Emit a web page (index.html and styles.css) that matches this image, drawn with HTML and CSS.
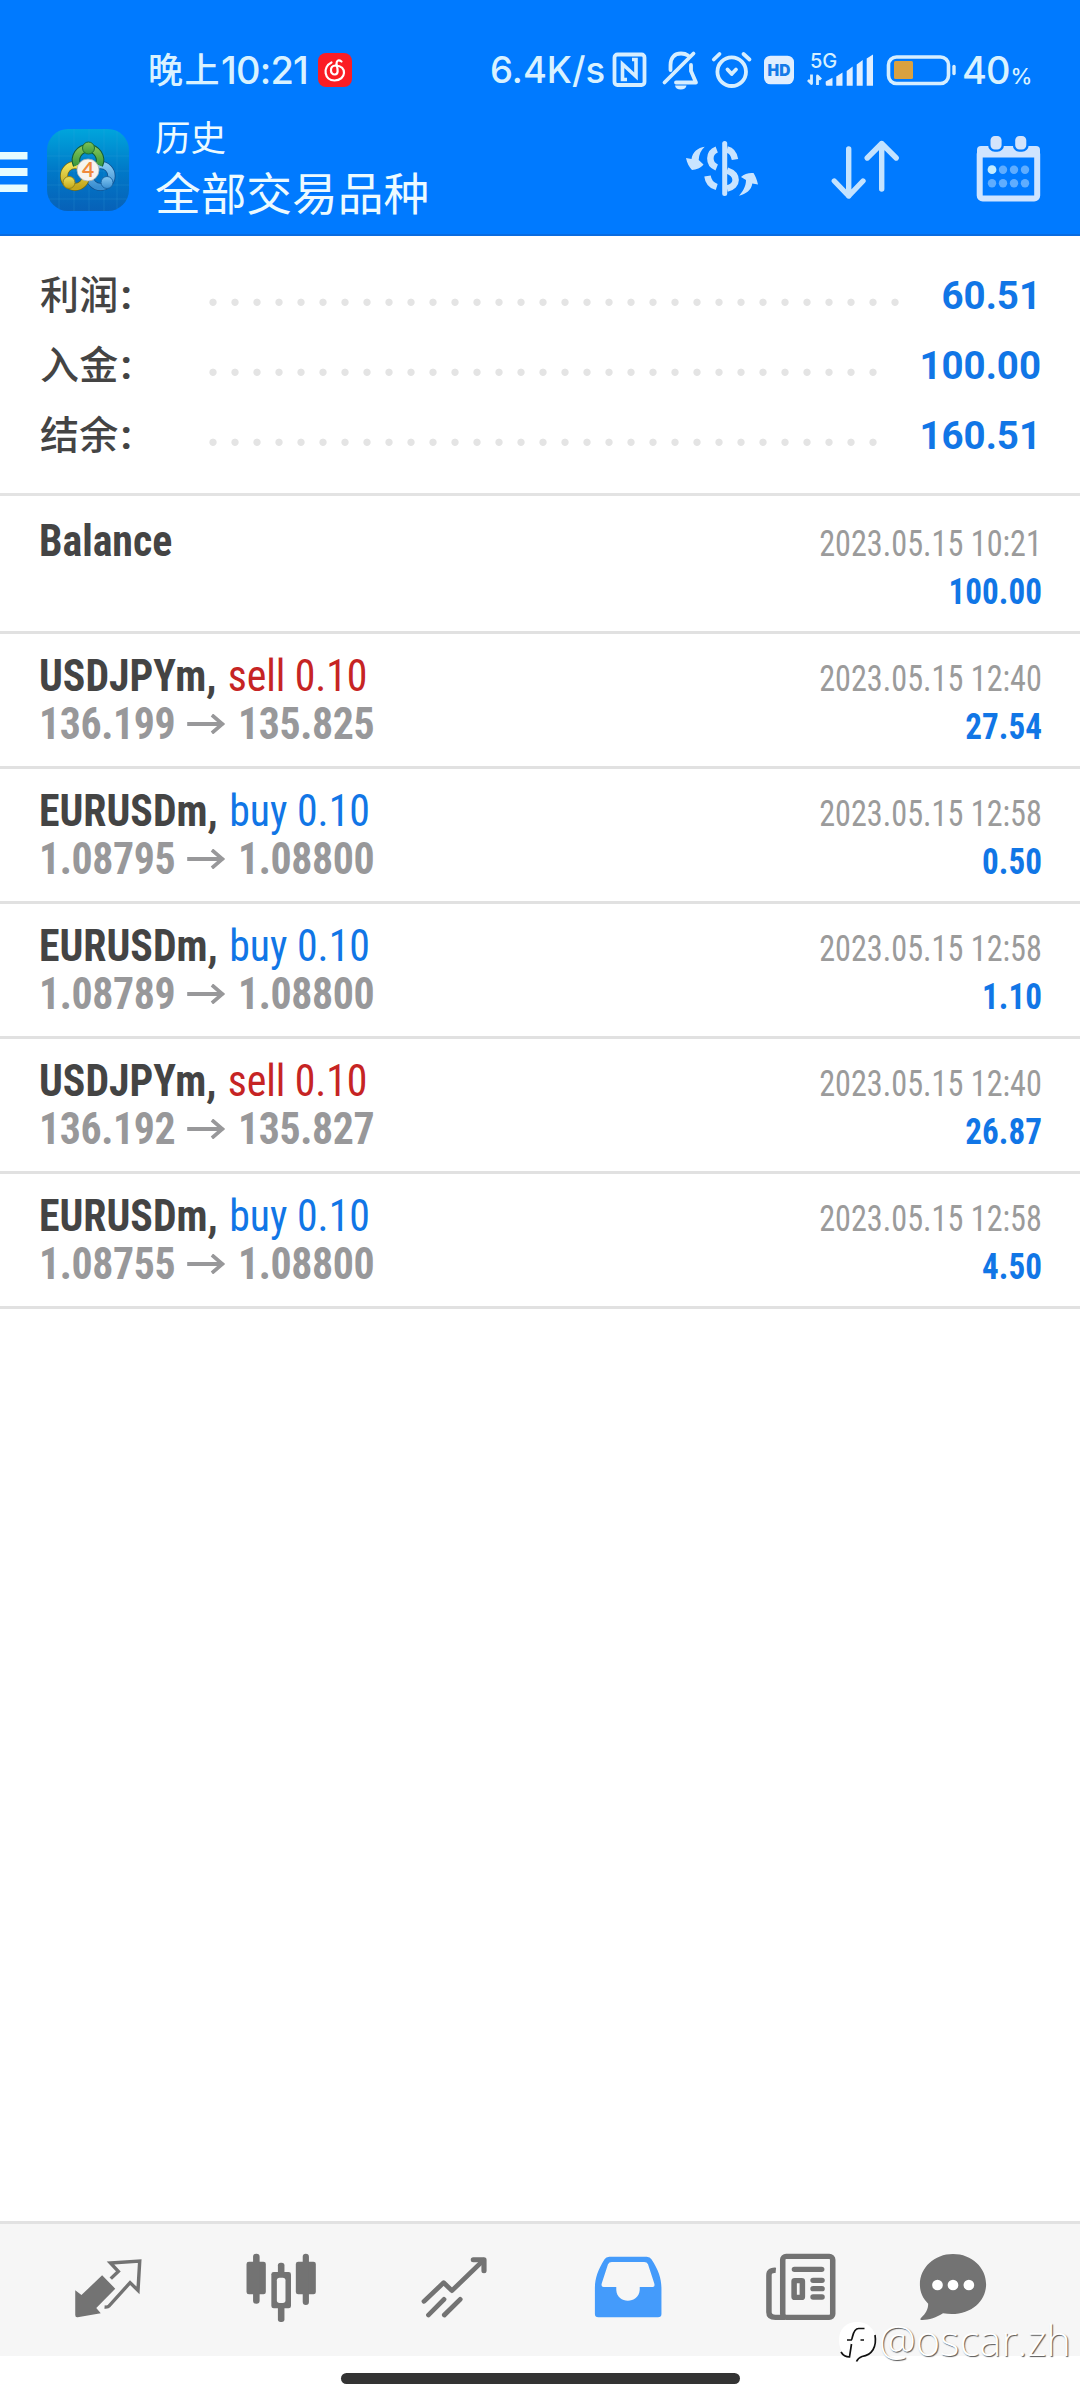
FILE: index.html
```
<!DOCTYPE html>
<html lang="zh-CN">
<head>
<meta charset="utf-8">
<title>历史</title>
<link rel="stylesheet" href="styles.css">
</head>
<body>
<div class="screen">
  <header class="header">
    <div class="status">
      <span class="clock"><span class="clock-cjk">晚上</span><span class="clock-num">10:21</span></span>
      <svg class="music" viewBox="0 0 34 34">
        <rect width="34" height="34" rx="8" fill="#fb1d24"/>
        <path d="M13.500 9.500C4 14 6.500 27.500 16.500 27.500C28.500 27.500 29.500 12.500 17.500 12.500C11 13 12 22 17 21.500C21.500 21 19 14 18.500 10.500C18.500 7 21 6.500 23.500 8.500" fill="none" stroke="#fff" stroke-width="2.200" stroke-linecap="round"/>
      </svg>
      <span class="speed">6.4K/s</span>
      <svg class="status-icons" viewBox="608 40 352 56" fill="none" stroke="#d6eeff" stroke-width="3.800" stroke-linecap="round" stroke-linejoin="round">
        <rect x="614.500" y="54.500" width="30" height="30.500" rx="3"/>
        <path d="M627 79.500H622.500V64L636 76.500V59.500H632" stroke-width="3.600" stroke-linecap="butt" stroke-linejoin="miter"/>
        <path d="M664.500 82.500L693.500 53.500M670.500 70V65C670.500 57 675 53.500 681 53.500C684 53.500 686 54 688 55.500M691 65V71L696 82.500H676"/>
        <path d="M675 85.500h11.500a5.800 4.500 0 0 1-11.500 0z" fill="#d6eeff" stroke="none"/>
        <circle cx="731.700" cy="71.700" r="14.300"/>
        <path d="M713.800 59.500L719.500 54M743.500 54L749.500 59.500M727.500 69.500L731.700 74L736 69.500"/>
        <rect x="764" y="55.700" width="30" height="28.600" rx="6.500" fill="#e0eeff" stroke="none"/>
        <text class="hd" x="779" y="75.700" text-anchor="middle">HD</text>
        <text class="net" x="810" y="67.500">5G</text>
        <path d="M811.500 74.500V83.500L808 80M817.500 85V76L821 79.500" stroke-width="2.800" stroke-linecap="butt"/>
        <g fill="#e0eeff" stroke="none">
          <path d="M825.700 81.500l6.800-3.800v8h-5.300q-1.500 0-1.500-1.500zM836.300 76.500l6.200-4v13.200h-6.200zM846.700 71l6-4.500v19.200h-6zM856.700 64.500l6-4.500v25.700h-6zM866.700 58.500l6.300-4v31.200h-6.300z"/>
        </g>
        <rect x="888.500" y="57" width="60" height="26.500" rx="8" stroke-width="3.600"/>
        <rect x="894" y="61" width="19" height="18" rx="1.500" fill="#d9a140" stroke="none"/>
        <path d="M954 66.500v7" stroke-width="3.400"/>
      </svg>
      <span class="battery">40<small>%</small></span>
    </div>
    <div class="toolbar">
      <svg class="menu" viewBox="0 152 28 40" fill="#e6fcff"><path d="M0 152h27.500v7.500H0zM0 168h27.500v8H0zM0 184.500h27.500v7.500H0z"/></svg>
      <svg class="logo" viewBox="0 0 82 82">
        <defs>
          <linearGradient id="bg" x1="0" y1="0" x2="0" y2="1"><stop offset="0" stop-color="#00a5dc"/><stop offset=".5" stop-color="#0079c8"/><stop offset="1" stop-color="#0761b8"/></linearGradient>
          <linearGradient id="gr" x1="0" y1="0" x2="0" y2="1"><stop offset="0" stop-color="#7fc255"/><stop offset="1" stop-color="#3a9a3f"/></linearGradient>
          <linearGradient id="ye" x1="0" y1="0" x2="0" y2="1"><stop offset="0" stop-color="#eee25a"/><stop offset="1" stop-color="#c3a61c"/></linearGradient>
          <linearGradient id="bl" x1="0" y1="0" x2="0" y2="1"><stop offset="0" stop-color="#85c8f2"/><stop offset="1" stop-color="#3a8fd2"/></linearGradient>
        </defs>
        <rect width="82" height="82" rx="21" fill="url(#bg)"/>
        <path d="M12 2v78M27 0v82M42 0v82M57 0v82M70 2v78M0 27h82M0 42h82M0 56h82M2 70h78" stroke="#35a9e0" stroke-opacity=".22" fill="none"/>
        <g fill="none">
          <circle cx="53.500" cy="47" r="11" stroke="#124f8c" stroke-width="8"/>
          <circle cx="53.500" cy="47" r="11" stroke="url(#bl)" stroke-width="6.500"/>
          <circle cx="28" cy="47" r="11" stroke="#6e6815" stroke-width="8"/>
          <circle cx="28" cy="47" r="11" stroke="url(#ye)" stroke-width="6.500"/>
          <path d="M30 36A12 12 0 1 1 52 36" stroke="#135a35" stroke-width="8.500"/>
          <path d="M30 36A12 12 0 1 1 52 36" stroke="url(#gr)" stroke-width="6.500"/>
        </g>
        <circle cx="41.500" cy="19" r="6" fill="url(#gr)" stroke="#1f6f35"/>
        <circle cx="22" cy="53.500" r="6" fill="url(#ye)" stroke="#91831b"/>
        <circle cx="60" cy="53.500" r="6" fill="url(#bl)" stroke="#1a65a5"/>
        <circle cx="41" cy="41" r="11" fill="#f6f3ef" stroke="#a9b3b3" stroke-width=".8"/>
        <text class="logo-num" x="41" y="48" text-anchor="middle">4</text>
      </svg>
      <div class="titles"><div class="title-small">历史</div><div class="title-main">全部交易品种</div></div>
      <svg class="act currency" viewBox="682 132 80 76" fill="none" stroke="#c9e4ff" stroke-width="6.500">
        <path d="M724.700 143.500V193.500" stroke-width="5" stroke-linecap="round"/>
        <path d="M716.700 149.500C708.500 152.500 708 164 716.700 167.500M727 149.500Q733.500 151 735 159.500M727 170.500C738.500 174.500 738.500 186 727 188.500M707.500 176Q708.500 184.500 716.700 187"/>
        <path d="M704.700 146.700C698 147.500 692.500 152 691.500 159L686 158C687 163 689 167 692 170C696 169.500 701 168 703.500 164.500L698.700 160C699 154.500 701 150 704.700 146.700zM739 195.700C746 194 751.500 190 752.300 183.500L758 184.500C757 180 755.500 176 753.500 173C749 172.500 744 174 741 177L746 180C746 186 743 191.500 739 195.700z" fill="#c9e4ff" stroke="none"/>
      </svg>
      <svg class="act sort" viewBox="828 132 74 76" fill="none" stroke="#c4e3ff" stroke-width="5.400" stroke-linecap="round" stroke-linejoin="round">
        <path d="M848.700 149V196M834.300 181L848.700 196L863 181M881.700 189V143.500M867.200 158L881.700 143.500L896.200 158"/>
      </svg>
      <svg class="act calendar" viewBox="974 132 68 76">
        <rect x="979.700" y="151" width="57.500" height="47.500" rx="3" fill="none" stroke="#cfe4ff" stroke-width="6"/>
        <rect x="977" y="146" width="63" height="11.500" rx="4" fill="#cfe4ff"/>
        <g fill="#d3e3fb" stroke="#007aff" stroke-width="2.400"><rect x="989.300" y="134.800" width="13.500" height="15.800" rx="5.500"/><rect x="1014" y="134.800" width="13.500" height="15.800" rx="5.500"/></g>
        <circle cx="992" cy="169.700" r="4.400" fill="#c4ecff"/>
        <g fill="#5fadff"><circle cx="1003" cy="169.700" r="4.200"/><circle cx="1014" cy="169.700" r="4.200"/><circle cx="1025" cy="169.700" r="4.200"/><circle cx="992" cy="183.200" r="4.200"/><circle cx="1003" cy="183.200" r="4.200"/><circle cx="1014" cy="183.200" r="4.200"/><circle cx="1025" cy="183.200" r="4.200"/></g>
      </svg>
    </div>
  </header>

  <section class="summary">
    <div class="sum"><span class="sum-label">利润<b>:</b></span><span class="dots"></span><span class="sum-value">60.51</span></div>
    <div class="sum"><span class="sum-label">入金<b>:</b></span><span class="dots"></span><span class="sum-value">100.00</span></div>
    <div class="sum"><span class="sum-label">结余<b>:</b></span><span class="dots"></span><span class="sum-value">160.51</span></div>
  </section>

  <main class="deals">
    <div class="deal first">
      <div class="left"><div class="name"><b>Balance</b></div></div>
      <div class="right"><div class="date">2023.05.15 10:21</div><div class="amount">100.00</div></div>
    </div>
    <div class="deal">
      <div class="left"><div class="name"><b>USDJPYm,</b><span class="sell">sell 0.10</span></div>
        <div class="prices"><span>136.199</span><svg class="arrow" viewBox="0 0 40 20"><path d="M0 10H38M26 1L37 10L26 19"/></svg><span>135.825</span></div></div>
      <div class="right"><div class="date">2023.05.15 12:40</div><div class="amount">27.54</div></div>
    </div>
    <div class="deal">
      <div class="left"><div class="name"><b>EURUSDm,</b><span class="buy">buy 0.10</span></div>
        <div class="prices"><span>1.08795</span><svg class="arrow" viewBox="0 0 40 20"><path d="M0 10H38M26 1L37 10L26 19"/></svg><span>1.08800</span></div></div>
      <div class="right"><div class="date">2023.05.15 12:58</div><div class="amount">0.50</div></div>
    </div>
    <div class="deal">
      <div class="left"><div class="name"><b>EURUSDm,</b><span class="buy">buy 0.10</span></div>
        <div class="prices"><span>1.08789</span><svg class="arrow" viewBox="0 0 40 20"><path d="M0 10H38M26 1L37 10L26 19"/></svg><span>1.08800</span></div></div>
      <div class="right"><div class="date">2023.05.15 12:58</div><div class="amount">1.10</div></div>
    </div>
    <div class="deal">
      <div class="left"><div class="name"><b>USDJPYm,</b><span class="sell">sell 0.10</span></div>
        <div class="prices"><span>136.192</span><svg class="arrow" viewBox="0 0 40 20"><path d="M0 10H38M26 1L37 10L26 19"/></svg><span>135.827</span></div></div>
      <div class="right"><div class="date">2023.05.15 12:40</div><div class="amount">26.87</div></div>
    </div>
    <div class="deal">
      <div class="left"><div class="name"><b>EURUSDm,</b><span class="buy">buy 0.10</span></div>
        <div class="prices"><span>1.08755</span><svg class="arrow" viewBox="0 0 40 20"><path d="M0 10H38M26 1L37 10L26 19"/></svg><span>1.08800</span></div></div>
      <div class="right"><div class="date">2023.05.15 12:58</div><div class="amount">4.50</div></div>
    </div>
  </main>

  <nav class="tabs">
    <div class="tab"><svg viewBox="198 126 232 228" preserveAspectRatio="none">
      <path d="M297 196L335 236L280 294L293 310L226 322Q219 323 219 315V241L237 255z" fill="#737373"/>
      <path d="M322 206L344 184L321 159L406 153L401 241L378 218L317 288Q314 292 304 291" fill="none" stroke="#737373" stroke-width="10"/></svg></div>
    <div class="tab"><svg viewBox="700 126 232 228" preserveAspectRatio="none" fill="#737373">
      <rect x="716" y="155" width="56" height="98" rx="7"/><rect x="735" y="131" width="19" height="150" rx="9"/>
      <rect x="859" y="155" width="58" height="98" rx="7"/><rect x="879" y="131" width="18" height="154" rx="9"/>
      <rect x="807" y="158" width="19" height="178" rx="8"/><rect x="788" y="186" width="57" height="109" rx="7"/><rect x="804" y="203" width="25" height="76" rx="8" fill="#f6f6f6"/></svg></div>
    <div class="tab"><svg viewBox="1202 126 232 228" preserveAspectRatio="none" fill="none" stroke="#737373" stroke-width="14" stroke-linecap="round" stroke-linejoin="round">
      <path d="M1231 274L1288 218L1312 242L1403 151M1244 315L1289 268M1290 315L1336 268"/>
      <path d="M1374 149H1405V182" stroke-width="15"/></svg></div>
    <div class="tab"><svg viewBox="138 126 232 228" preserveAspectRatio="none">
      <path fill-rule="evenodd" fill="#449bfb" d="M200 140H308Q318 140 322 148C342 180 351 205 351 235V312Q351 322 341 322H168Q158 322 158 312V235C158 205 167 180 186 148Q190 140 200 140zM207 156Q199 156 196 163L178 220Q175 231 183 231H220V240C222 283 285 283 288 240V231H326Q333 231 330 220L312 163Q309 156 301 156z"/></svg></div>
    <div class="tab"><svg viewBox="642 126 232 228" preserveAspectRatio="none" fill="none" stroke="#737373" stroke-width="16" stroke-linecap="round">
      <rect x="705" y="139" width="145" height="183" rx="10"/>
      <path d="M685 181Q665 179 665 196V307Q665 322 684 322H712" stroke-linecap="butt"/>
      <path d="M739 178H818M793 211H819M793 236H819M793 261H819"/>
      <rect x="738" y="212" width="24" height="50" rx="2"/></svg></div>
    <div class="tab tab-last"><svg viewBox="1083 126 232 228" preserveAspectRatio="none">
      <path fill="#737373" d="M1199 132C1254 132 1295 173 1295 223C1295 277 1245 323 1170 310C1150 323 1127 331 1107 330Q1102 329 1106 324C1120 310 1127 298 1127 281C1110 263 1103 245 1103 223C1103 173 1145 132 1199 132z"/>
      <g fill="#fff"><circle cx="1154" cy="225" r="15.500"/><circle cx="1199" cy="225" r="15.500"/><circle cx="1245" cy="225" r="15.500"/></g></svg></div>
  </nav>
  <footer class="home"><span class="home-bar"></span></footer>

  <div class="watermark">
    <svg viewBox="0 0 40 44">
      <path d="M19 2C30 2 37.500 9 37.500 20C37.500 31 32 35 24 36.500Q20 38 18.500 41.500L17 38L10 37C4 34 1 28 1 20C1 9 8 2 19 2z" fill="#fff"/>
      <path d="M37 15C39 27 34 35 24 36.500Q20 38 18.500 41.500M9 20H13C15 20 14 8 21 8.500H26.500M22.500 20H26M3 32Q6 37 11.500 37L13.500 24" fill="none" stroke="#111" stroke-width="1.700"/>
    </svg>
    <span>@oscar.zh</span>
  </div>
</div>
</body>
</html>
```
FILE: styles.css
```
* { box-sizing: border-box; }
body { margin: 0; background: #fff; font-family: Roboto, "Noto Sans CJK SC", sans-serif; }
svg { display: block; flex: none; }
.screen { position: relative; display: flex; flex-direction: column; width: 1080px; height: 2400px; overflow: hidden; background: #fff; }

.header { height: 236px; background: #007aff; border-bottom: 2px solid #0a6ce0; color: #e3f7ff; }
.status { display: flex; height: 110px; padding: 40px 0 0 148px; white-space: nowrap; color: #d9f2ff; font-weight: 500; }
.clock { display: flex; width: 161px; line-height: 61px; }
.clock-cjk { width: 73px; font-family: "Noto Sans CJK SC", sans-serif; font-size: 35px; letter-spacing: 1.500px; line-height: 55px; }
.clock-num { font-family: Inter, sans-serif; font-size: 38px; letter-spacing: -.8px; }
.music { width: 34px; height: 34px; margin: 13px 0 0 9px; }
.speed { width: 118px; margin-left: 138px; font-family: Inter, sans-serif; font-size: 36.500px; line-height: 61px; }
.status-icons { width: 352px; height: 56px; }
.hd { fill: #167be8; stroke: none; font: 900 15.500px Inter, sans-serif; }
.net { fill: #d6f0ff; stroke: none; font: 500 20px Inter, sans-serif; }
.battery { margin-left: 2px; font-family: Inter, sans-serif; font-size: 38px; line-height: 61px; letter-spacing: -1px; }
.battery small { font-size: 22px; margin-left: 1px; }

.toolbar { display: flex; height: 124px; }
.menu { width: 28px; height: 40px; margin-top: 42px; }
.logo { width: 82px; height: 82px; margin: 19px 0 0 19px; }
.logo-num { fill: #f08a3c; font: 700 21px Lato, sans-serif; }
.titles { width: 555px; padding-left: 26px; font-family: "Noto Sans CJK SC", sans-serif; color: #ecfaff; }
.title-small { margin-top: 3px; font-size: 35.500px; line-height: 46px; }
.title-main { margin-top: 4px; font-size: 45.700px; line-height: 56px; }
.act { height: 76px; margin-top: 22px; }
.currency { width: 80px; margin-left: -2px; }
.sort { width: 74px; margin-left: 66px; }
.calendar { width: 68px; margin-left: 72px; }

.summary { height: 260px; padding: 25px 39px 0 40px; border-bottom: 3px solid #e3e3e3; }
.sum { display: flex; height: 70px; line-height: 70px; font-size: 39px; }
.sum-label { width: 162px; font-weight: 500; letter-spacing: .3px; line-height: 68px; color: #444; }
.sum-label b { margin-left: 2px; font-size: 41px; }
.dots { flex: 1; margin-right: 37px; background: radial-gradient(circle at 11px 41.300px, #e4e4e4 3.200px, transparent 4.100px) 0 0 / 22px 70px repeat-x; }
.sum-value { font-size: 38.500px; font-weight: 700; color: #1176e6; }

.deal { display: flex; justify-content: space-between; height: 135px; padding: 18px 38px 0 39px; border-bottom: 3px solid #e1e1e1; font-family: "Roboto Condensed", Roboto, sans-serif; white-space: nowrap; }
.first { height: 138px; padding-top: 21px; }
.name, .prices { display: flex; height: 48px; font-size: 44px; line-height: 48px; color: #444; transform: scaleX(.95); transform-origin: left; }
.name b { font-weight: 700; margin-right: 12px; }
.sell { color: #c62424; letter-spacing: -.1px; }
.buy { color: #1176e6; }
.prices { font-weight: 700; color: #98989a; letter-spacing: -.4px; }
.arrow { width: 42px; height: 20px; margin: 13.500px 12.500px 0 11.500px; fill: none; stroke: #98989a; stroke-width: 3.800; }
.right { padding-top: 3px; font-size: 36px; line-height: 48px; text-align: right; }
.date, .amount { transform-origin: right; }
.date { color: #9b9b9b; transform: scaleX(.895); }
.amount { font-weight: 700; color: #1176e6; transform: scaleX(.92); }

.tabs { display: flex; height: 135px; margin-top: auto; padding-left: 21px; border-top: 3px solid #e2e2e2; background: #f6f6f6; }
.tab { display: flex; align-items: center; justify-content: center; width: 173.400px; }
.tab-last { width: 130px; }
.tab svg { width: 80px; height: 76px; }
.home { display: flex; justify-content: center; height: 44px; padding-top: 17px; }
.home-bar { width: 399px; height: 11px; border-radius: 6px; background: #333; }

.watermark { position: absolute; left: 838px; top: 2320px; display: flex; }
.watermark svg { width: 40px; height: 44px; }
.watermark span { margin: -2px 0 0 1px; font: 300 41.500px/44px "Open Sans", sans-serif; color: #fff; text-shadow: 1px 1px 1px #555; }
```
